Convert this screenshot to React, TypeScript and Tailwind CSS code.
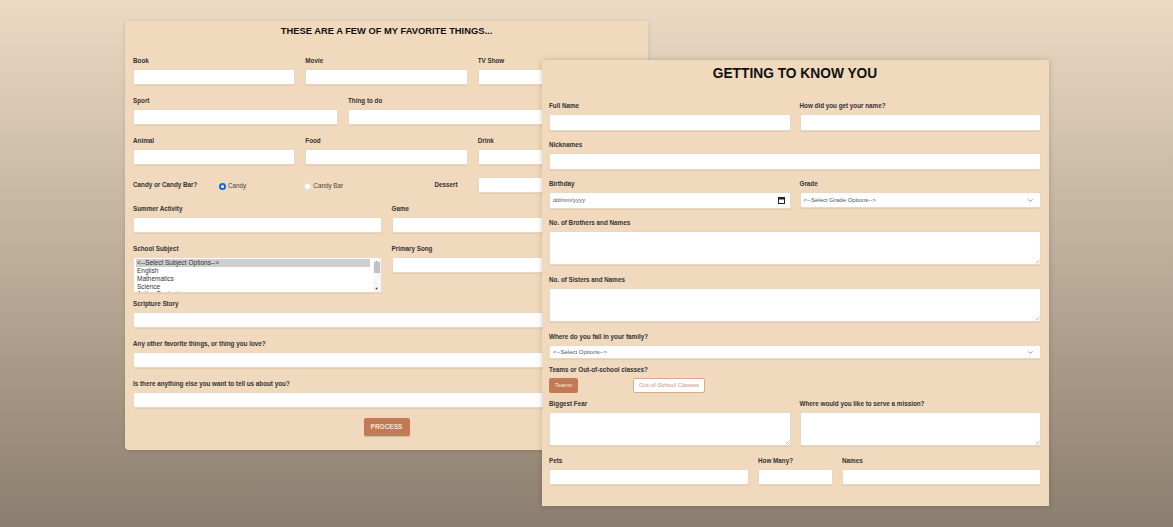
import { ChevronDown } from "lucide-react";

const label = "block text-[6.3px] leading-[8px] font-bold text-[#333] mb-[4px] whitespace-nowrap";
const box = "block w-full bg-white rounded-[2px] border border-[#ead8c2] shadow-[0_1px_1px_rgba(0,0,0,0.06)] outline-none";

const Field = ({ title, h = "h-[16px]" }: { title: string; h?: string }) => (
  <div>
    <span className={label}>{title}</span>
    <input className={`${box} ${h}`} />
  </div>
);

const Area = ({ title }: { title: string }) => (
  <div>
    <span className={label}>{title}</span>
    <div className="relative">
      <textarea className={`${box} h-[34px] resize-none`} />
      <svg width="5" height="5" viewBox="0 0 5 5" className="absolute right-[1px] bottom-[1px]">
        <path d="M4.5 0.5 L0.5 4.5 M4.5 2.5 L2.5 4.5" stroke="#b5b5b5" strokeWidth="0.7" />
      </svg>
    </div>
  </div>
);

const FakeSelect = ({ text, h = "h-[17px]" }: { text: string; h?: string }) => (
  <div className={`${box} ${h} flex items-center justify-between pl-[3px] pr-[6px]`}>
    <span className="text-[6px] text-[#555]">{text}</span>
    <ChevronDown size={7} strokeWidth={2} className="text-[#555]" />
  </div>
);

const FavoriteThings = () => (
  <div className="relative w-[523px] shrink-0 ml-[125px] mt-[21px] bg-[#f0d9bc] rounded-b-[4px] shadow-[0_1px_4px_rgba(0,0,0,0.12)] px-[8px] pt-[6px] pb-[14px]">
    <h2 className="text-center text-[9.35px] leading-[9px] font-bold text-[#111] mb-[21px]">
      THESE ARE A FEW OF MY FAVORITE THINGS...
    </h2>
    <div className="flex flex-col gap-[12px]">
      <div className="grid grid-cols-3 gap-x-[10px]">
        <Field title="Book" />
        <Field title="Movie" />
        <Field title="TV Show" />
      </div>
      <div className="grid grid-cols-[205px_1fr] gap-x-[10px]">
        <Field title="Sport" />
        <Field title="Thing to do" />
      </div>
      <div className="grid grid-cols-3 gap-x-[10px]">
        <Field title="Animal" />
        <Field title="Food" />
        <Field title="Drink" />
      </div>
      <div className="grid grid-cols-3 gap-x-[10px] h-[16px] items-center">
        <div className="flex items-center">
          <span className="w-[86px] text-[6.3px] font-bold text-[#333]">Candy or Candy Bar?</span>
          <span className="w-[7px] h-[7px] rounded-full border-[2px] border-[#1466d6] bg-white mt-[2px]" />
          <span className="ml-[2px] text-[6.3px] text-[#444] mt-[2px]">Candy</span>
        </div>
        <div className="flex items-center justify-between pr-[10px] -ml-[1px]">
          <div className="flex items-center mt-[2px]">
            <span className="w-[7px] h-[7px] rounded-full border border-[#e3e3e3] bg-white" />
            <span className="ml-[2px] text-[6.3px] text-[#444]">Candy Bar</span>
          </div>
          <span className="text-[6.3px] font-bold text-[#333]">Dessert</span>
        </div>
        <input className={`${box} h-[16px]`} />
      </div>
      <div className="grid grid-cols-2 gap-x-[10px]">
        <Field title="Summer Activity" />
        <Field title="Game" />
      </div>
      <div className="grid grid-cols-2 gap-x-[10px] -mb-[5px]">
        <div>
          <span className={label}>School Subject</span>
          <div className={`${box} h-[36px] flex overflow-hidden`}>
            <div className="flex-1 pt-[1px] pl-[2px] text-[6.5px] leading-[8px] text-[#333]">
              <div className="bg-[#cecece] pl-[1px]">&lt;--Select Subject Options--&gt;</div>
              <div className="pl-[1px]">English</div>
              <div className="pl-[1px]">Mathematics</div>
              <div className="pl-[1px]">Science</div>
              <div className="pl-[1px] leading-[6px]">Acting Beginnings</div>
            </div>
            <div className="w-[8px] ml-[3px] flex flex-col items-center justify-between py-[1px] bg-[#f7f7f7]">
              <span className="text-[4px] leading-[5px] text-[#666]">▲</span>
              <span className="w-[6px] h-[11px] bg-[#c1c1c1] -mt-[2px]" />
              <span className="flex-1" />
              <span className="text-[4px] leading-[5px] text-[#333]">▼</span>
            </div>
          </div>
        </div>
        <Field title="Primary Song" />
      </div>
      <Field title="Scripture Story" />
      <Field title="Any other favorite things, or thing you love?" />
      <Field title="Is there anything else you want to tell us about you?" />
    </div>
    <div className="flex justify-center mt-[10px]">
      <button className="w-[46px] h-[18px] rounded-[2px] bg-[#c27a55] text-[6.5px] font-bold text-[#f7e0d2] shadow-[0_1px_1px_rgba(0,0,0,0.15)]">
        PROCESS
      </button>
    </div>
  </div>
);

const CalendarGlyph = () => (
  <svg width="7" height="7" viewBox="0 0 7 7">
    <rect x="0.5" y="0.5" width="6" height="6" fill="none" stroke="#222" strokeWidth="1" />
    <rect x="0.5" y="0.5" width="6" height="2" fill="#222" />
  </svg>
);

const GettingToKnowYou = () => (
  <div className="relative z-10 w-[507px] h-[446px] shrink-0 -ml-[106px] mt-[60px] bg-[#f0d9bc] shadow-[0_0_6px_rgba(0,0,0,0.18)] pl-[7px] pr-[8px] pt-[7px]">
    <h1 className="text-center text-[13.75px] leading-[14px] font-bold text-[#111] mb-[21px]">
      GETTING TO KNOW YOU
    </h1>
    <div className="grid grid-cols-2 gap-x-[9px]">
      <Field title="Full Name" h="h-[17px]" />
      <Field title="How did you get your name?" h="h-[17px]" />
    </div>
    <div className="mt-[10px]">
      <Field title="Nicknames" h="h-[17px]" />
    </div>
    <div className="grid grid-cols-2 gap-x-[9px] mt-[10px]">
      <div>
        <span className={label}>Birthday</span>
        <div className={`${box} h-[17px] flex items-center justify-between pl-[3px] pr-[5px]`}>
          <span className="text-[6px] text-[#555]">dd/mm/yyyy</span>
          <CalendarGlyph />
        </div>
      </div>
      <div>
        <span className={label}>Grade</span>
        <FakeSelect text="<--Select Grade Options-->" h="h-[16px]" />
      </div>
    </div>
    <div className="mt-[10px]">
      <Area title="No. of Brothers and Names" />
    </div>
    <div className="mt-[11px]">
      <Area title="No. of Sisters and Names" />
    </div>
    <div className="mt-[11px]">
      <span className={label}>Where do you fall in your family?</span>
      <FakeSelect text="<--Select Options-->" h="h-[14px]" />
    </div>
    <div className="mt-[7px]">
      <span className={label}>Teams or Out-of-school classes?</span>
      <div className="flex items-center">
        <button className="w-[29px] h-[15px] rounded-[2px] bg-[#c27a55] text-[6px] text-[#f7e3d6]">Teams</button>
        <button className="ml-[55px] w-[72px] h-[15px] rounded-[2px] bg-white border border-[#dba98f] text-[6px] text-[#c99478]">
          Out-of-School Classes
        </button>
      </div>
    </div>
    <div className="grid grid-cols-2 gap-x-[9px] mt-[7px]">
      <Area title="Biggest Fear" />
      <Area title="Where would you like to serve a mission?" />
    </div>
    <div className="grid grid-cols-[200px_75px_1fr] gap-x-[9px] mt-[11px]">
      <Field title="Pets" />
      <Field title="How Many?" />
      <Field title="Names" />
    </div>
  </div>
);

export default function App() {
  return (
    <div className="min-h-[527px] w-full overflow-hidden bg-[linear-gradient(to_bottom,#ecdac3,#8c7e6e)] font-['Liberation_Sans',Arial,sans-serif]">
      <div className="flex items-start">
        <FavoriteThings />
        <GettingToKnowYou />
      </div>
    </div>
  );
}
